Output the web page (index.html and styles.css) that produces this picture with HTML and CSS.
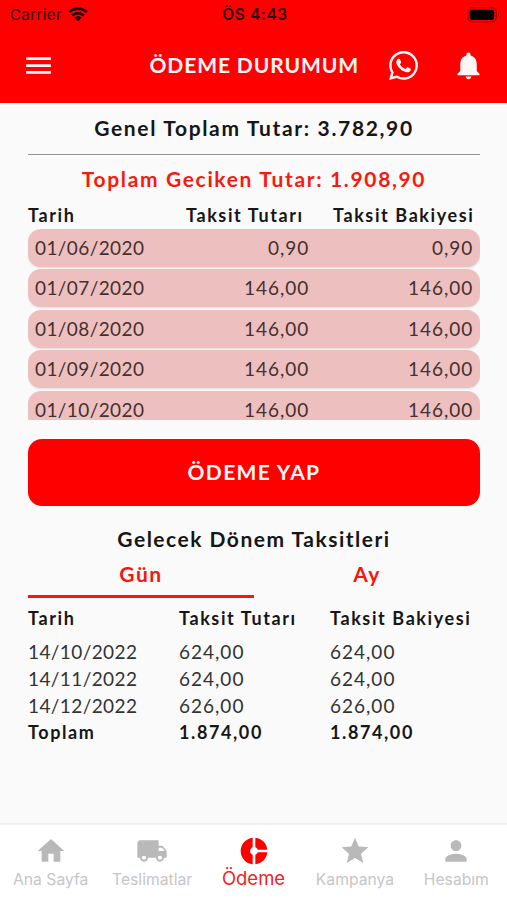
FILE: index.html
```html
<!DOCTYPE html>
<html lang="tr">
<head>
  <meta charset="UTF-8">
  <meta name="viewport" content="width=device-width, initial-scale=1.0">
  <title>Ödeme Durumum</title>
  <link rel="stylesheet" href="styles.css">
</head>
<body>

  <!-- Header -->
  <header>
    <div class="status-bar">
      <div class="carrier">
        <span>Carrier</span>
        <svg class="wifi" viewBox="0 0 20 15">
          <path d="M1.2 5.2a12.6 12.6 0 0 1 17.6 0M4.2 8.5a8.3 8.3 0 0 1 11.6 0" fill="none" stroke="currentColor" stroke-width="2.7"/>
          <path d="M6.3 10.6a5.3 5.3 0 0 1 7.4 0L10 14.6z" fill="currentColor"/>
        </svg>
      </div>
      <span class="clock">ÖS 4:43</span>
      <svg class="battery" viewBox="0 0 33 16">
        <rect x="0.7" y="0.7" width="28.6" height="14.2" rx="4.5" fill="none" stroke="#000" stroke-opacity=".4"/>
        <rect x="2.7" y="2.7" width="24.6" height="10.2" rx="2.6"/>
        <path d="M31 5.6v4.6q1.6-2.3 0-4.6z" opacity=".45"/>
      </svg>
    </div>
    <div class="toolbar">
      <svg class="menu" viewBox="0 0 24 24"><path d="M3 18h18v-2H3v2zm0-5h18v-2H3v2zm0-7v2h18V6H3z"/></svg>
      <h1>ÖDEME DURUMUM</h1>
      <svg class="whatsapp" viewBox="0 0 24 24"><path d="M17.472 14.382c-.297-.149-1.758-.867-2.03-.967-.273-.099-.471-.148-.67.15-.197.297-.767.966-.94 1.164-.173.199-.347.223-.644.075-.297-.15-1.255-.463-2.39-1.475-.883-.788-1.48-1.761-1.653-2.059-.173-.297-.018-.458.13-.606.134-.133.298-.347.446-.52.149-.174.198-.298.298-.497.099-.198.05-.371-.025-.52-.075-.149-.669-1.612-.916-2.207-.242-.579-.487-.5-.669-.51-.173-.008-.371-.01-.57-.01-.198 0-.52.074-.792.372-.272.297-1.04 1.016-1.04 2.479 0 1.462 1.065 2.875 1.213 3.074.149.198 2.096 3.2 5.077 4.487.709.306 1.262.489 1.694.625.712.227 1.36.195 1.871.118.571-.085 1.758-.719 2.006-1.413.248-.694.248-1.289.173-1.413-.074-.124-.272-.198-.57-.347m-5.421 7.403h-.004a9.87 9.87 0 01-5.031-1.378l-.361-.214-3.741.982.998-3.648-.235-.374a9.86 9.86 0 01-1.51-5.26c.001-5.45 4.436-9.884 9.888-9.884 2.64 0 5.122 1.03 6.988 2.898a9.825 9.825 0 012.893 6.994c-.003 5.45-4.437 9.884-9.885 9.884m8.413-18.297A11.815 11.815 0 0012.05 0C5.495 0 .16 5.335.157 11.892c0 2.096.547 4.142 1.588 5.945L.057 24l6.305-1.654a11.882 11.882 0 005.683 1.448h.005c6.554 0 11.89-5.335 11.893-11.893a11.821 11.821 0 00-3.48-8.413z"/></svg>
      <svg class="bell" viewBox="0 0 24 24"><path d="M12 22c1.1 0 2-.9 2-2h-4c0 1.1.89 2 2 2zm6-6v-5c0-3.07-1.64-5.64-4.5-6.32V4c0-.83-.67-1.5-1.5-1.5s-1.5.67-1.5 1.5v.68C7.63 5.36 6 7.92 6 11v5l-2 2v1h16v-1l-2-2z"/></svg>
    </div>
  </header>

  <main>
    <h2 class="total">Genel Toplam Tutar: 3.782,90</h2>
    <h2 class="overdue">Toplam Geciken Tutar: 1.908,90</h2>

    <!-- Overdue installments -->
    <div class="list-head">
      <span>Tarih</span><span>Taksit Tutarı</span><span>Taksit Bakiyesi</span>
    </div>
    <div class="list">
      <div class="item"><span class="date">01/06/2020</span><span>0,90</span><span>0,90</span></div>
      <div class="item"><span class="date">01/07/2020</span><span>146,00</span><span>146,00</span></div>
      <div class="item"><span class="date">01/08/2020</span><span>146,00</span><span>146,00</span></div>
      <div class="item"><span class="date">01/09/2020</span><span>146,00</span><span>146,00</span></div>
      <div class="item"><span class="date">01/10/2020</span><span>146,00</span><span>146,00</span></div>
    </div>

    <button class="pay">ÖDEME YAP</button>

    <!-- Upcoming installments -->
    <h2 class="upcoming">Gelecek Dönem Taksitleri</h2>
    <div class="tabs">
      <div class="tab active">Gün</div>
      <div class="tab">Ay</div>
    </div>
    <div class="plan">
      <div class="row head"><span>Tarih</span><span>Taksit Tutarı</span><span>Taksit Bakiyesi</span></div>
      <div class="row"><span class="date">14/10/2022</span><span>624,00</span><span>624,00</span></div>
      <div class="row"><span class="date">14/11/2022</span><span>624,00</span><span>624,00</span></div>
      <div class="row"><span class="date">14/12/2022</span><span>626,00</span><span>626,00</span></div>
      <div class="row sum"><span>Toplam</span><span>1.874,00</span><span>1.874,00</span></div>
    </div>
  </main>

  <!-- Bottom navigation -->
  <nav>
    <div class="nav-item">
      <svg viewBox="0 0 24 24"><path d="M10 20v-6h4v6h5v-8h3L12 3 2 12h3v8z"/></svg>
      <span>Ana Sayfa</span>
    </div>
    <div class="nav-item">
      <svg viewBox="0 0 24 24"><path d="M20 8h-3V4H3c-1.1 0-2 .9-2 2v11h2c0 1.66 1.34 3 3 3s3-1.34 3-3h6c0 1.66 1.34 3 3 3s3-1.34 3-3h2v-5l-3-4zM6 18.5c-.83 0-1.5-.67-1.5-1.5s.67-1.5 1.5-1.5 1.5.67 1.5 1.5-.67 1.5-1.5 1.5zm13.5-9l1.96 2.5H17V9.5h2.5zm-1.5 9c-.83 0-1.5-.67-1.5-1.5s.67-1.5 1.5-1.5 1.5.67 1.5 1.5-.67 1.5-1.5 1.5z"/></svg>
      <span>Teslimatlar</span>
    </div>
    <div class="nav-item selected">
      <svg viewBox="0 0 24 24"><path d="M11 9.16V2c-5 .5-9 4.79-9 10s4 9.5 9 10v-7.16c-1-.41-2-1.52-2-2.84s1-2.43 2-2.84zM14.86 11H22c-.48-4.75-4-8.53-9-9v7.16c1 .3 1.52.98 1.86 1.84zM13 14.84V22c5-.47 8.52-4.25 9-9h-7.14c-.34.86-.86 1.54-1.86 1.84z"/></svg>
      <span>Ödeme</span>
    </div>
    <div class="nav-item">
      <svg viewBox="0 0 24 24"><path d="M12 17.27L18.18 21l-1.64-7.03L22 9.24l-7.19-.61L12 2 9.19 8.63 2 9.24l5.46 4.73L5.82 21z"/></svg>
      <span>Kampanya</span>
    </div>
    <div class="nav-item">
      <svg viewBox="0 0 24 24"><path d="M12 12c2.21 0 4-1.79 4-4s-1.79-4-4-4-4 1.79-4 4 1.79 4 4 4zm0 2c-2.67 0-8 1.34-8 4v2h16v-2c0-2.66-5.33-4-8-4z"/></svg>
      <span>Hesabım</span>
    </div>
  </nav>

</body>
</html>
```
FILE: styles.css
```css
* {
  box-sizing: border-box;
}

body {
  margin: 0;
  height: 900px;
  display: flex;
  flex-direction: column;
  overflow: hidden;
  background: #fafafa;
  color: #161616;
  font-family: Lato, sans-serif;
  white-space: nowrap;
}

h1, h2 {
  margin: 0;
}

svg {
  display: block;
  flex: none;
  fill: currentColor;
}

/* ====== HEADER ====== */
header {
  flex: none;
  height: 103px;
  background: #ff0000;
}

.status-bar {
  display: grid;
  grid-template-columns: 1fr auto 1fr;
  align-items: center;
  height: 29px;
  padding: 0 7px 0 10px;
  font-family: Inter, sans-serif;
  font-size: 15px;
  color: #300;
}

.carrier {
  display: flex;
  align-items: center;
  gap: 6px;
  letter-spacing: 0.4px;
}

.wifi {
  width: 20px;
  height: 15px;
  color: #200;
}

.clock {
  font-size: 15.5px;
  font-weight: 600;
  letter-spacing: 0.6px;
}

.battery {
  justify-self: end;
  width: 33px;
  height: 16px;
  fill: #000;
}

.toolbar {
  display: flex;
  align-items: center;
  height: 73px;
  padding: 0 22px;
  color: #fff6f6;
}

.menu, .bell {
  width: 33px;
  height: 33px;
}

.whatsapp {
  width: 29px;
  height: 29px;
  margin: 0 34px 0 30px;
}

.toolbar h1 {
  margin-left: auto;
  padding-bottom: 2px;
  font-size: 21px;
  line-height: 30px;
  letter-spacing: 0.9px;
}

/* ====== CONTENT ====== */
main {
  flex: 1;
  padding: 0 27px 0 28px;
}

h2 {
  font-size: 21px;
  line-height: 28px;
  letter-spacing: 1.65px;
  text-align: center;
}

.total {
  height: 52px;
  padding-top: 11px;
  border-bottom: 1px solid #929292;
}

.overdue {
  padding-top: 10px;
  color: #f8190f;
}

.list-head {
  display: grid;
  grid-template-columns: 158px 147px 1fr;
  height: 36px;
  padding-top: 10px;
  font-size: 18px;
  font-weight: bold;
  line-height: 24px;
  letter-spacing: 1.6px;
}

.list {
  height: 191px;
  overflow: hidden;
}

.item {
  display: grid;
  grid-template-columns: 1fr 165px 164px;
  height: 38px;
  margin-bottom: 2.4px;
  padding: 0 7px;
  background: #eebfbf;
  border-radius: 13px;
  box-shadow: 0 1px 2px rgba(0, 0, 0, 0.12);
  color: #45302f;
  font-size: 19px;
  line-height: 37px;
  letter-spacing: 1px;
}

.item span + span {
  text-align: right;
}

.date {
  letter-spacing: 0.4px;
}

.pay {
  display: block;
  width: 100%;
  height: 67px;
  margin: 19px 0 19px;
  padding: 0 0 3px;
  background: #ff0000;
  border: none;
  border-radius: 14px;
  color: #fff6f6;
  font: bold 21px Lato, sans-serif;
  letter-spacing: 1.35px;
}

.upcoming {
  letter-spacing: 1.5px;
}

.tabs {
  display: flex;
  margin-top: 7px;
}

.tab {
  flex: 1;
  height: 38px;
  color: #f8140f;
  font-size: 21px;
  font-weight: bold;
  line-height: 28px;
  letter-spacing: 1.5px;
  text-align: center;
}

.tab.active {
  border-bottom: 3px solid #f8140f;
}

.plan {
  padding-top: 7px;
}

.row {
  display: grid;
  grid-template-columns: 151px 151px 1fr;
  color: #333;
  font-size: 19px;
  line-height: 27px;
  letter-spacing: 1px;
}

.row.head, .row.sum {
  color: #161616;
  font-size: 18px;
  font-weight: bold;
  letter-spacing: 1.6px;
}

.row.head {
  height: 33px;
}

/* ====== BOTTOM NAV ====== */
nav {
  flex: none;
  display: flex;
  height: 77px;
  background: #fff;
  border-top: 2px solid #f1f1f1;
}

.nav-item {
  flex: 1;
  display: flex;
  flex-direction: column;
  align-items: center;
  padding-top: 10px;
  color: #b9b9b9;
  font-family: Inter, sans-serif;
  font-size: 15.7px;
  line-height: 24px;
}

.nav-item svg {
  width: 32px;
  height: 32px;
}

.nav-item span {
  margin-top: 1px;
  color: #c6c6c6;
}

.nav-item.selected {
  color: #ff0000;
  font-size: 18.5px;
}

.nav-item.selected span {
  margin-top: -1px;
  color: #f8201c;
}
```
